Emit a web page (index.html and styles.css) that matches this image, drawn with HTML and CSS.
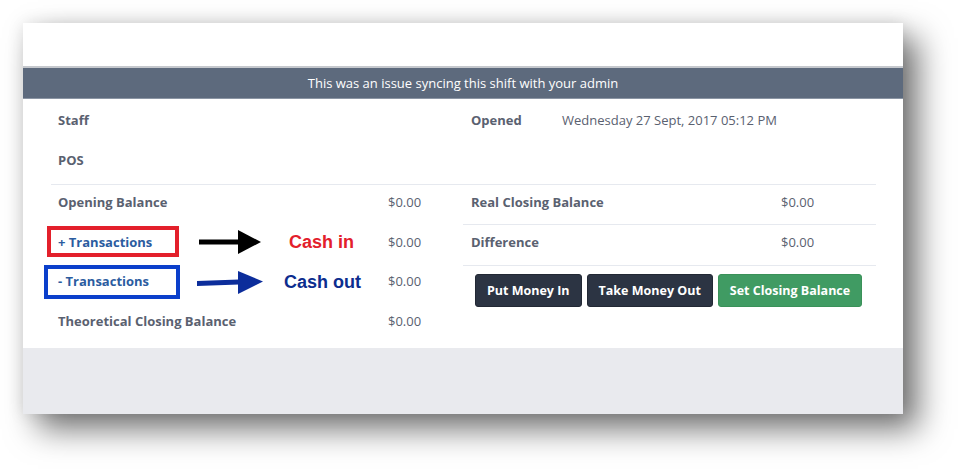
FILE: index.html
```html
<!DOCTYPE html>
<html>
<head>
<meta charset="utf-8">
<link rel="stylesheet" href="styles.css">
</head>
<body>
<div class="card">
  <div class="card-top"></div>
  <div class="banner">This was an issue syncing this shift with your admin</div>
  <div class="content">
    <div class="section top">
      <div class="col left">
        <div class="row"><span class="label">Staff</span></div>
        <div class="row"><span class="label">POS</span></div>
      </div>
      <div class="col right">
        <div class="row opened"><span class="label">Opened</span><span class="value">Wednesday 27 Sept, 2017 05:12 PM</span></div>
      </div>
    </div>
    <div class="section lower">
      <div class="col left">
        <div class="row"><span class="label">Opening Balance</span><span class="value">$0.00</span></div>
        <div class="row annotated short">
          <span class="label link">+ Transactions</span><span class="value">$0.00</span>
          <span class="mark mark-red"></span>
          <svg class="arrow arrow-in" width="62" height="24" viewBox="0 0 62 24"><rect x="0" y="9.5" width="41" height="5" fill="#000"/><polygon points="39,0 62,12 39,24" fill="#000"/></svg>
          <span class="note note-in">Cash in</span>
        </div>
        <div class="row annotated">
          <span class="label link">- Transactions</span><span class="value">$0.00</span>
          <span class="mark mark-blue"></span>
          <svg class="arrow arrow-out" width="66" height="24" viewBox="0 0 66 24"><polygon points="0,10 42,8.5 42,13.5 0,15" fill="#0c2d9b"/><polygon points="41,0 66,10.5 41,23" fill="#0c2d9b"/></svg>
          <span class="note note-out">Cash out</span>
        </div>
        <div class="row"><span class="label">Theoretical Closing Balance</span><span class="value">$0.00</span></div>
      </div>
      <div class="col right">
        <div class="row"><span class="label">Real Closing Balance</span><span class="value">$0.00</span></div>
        <div class="row ruled tall"><span class="label">Difference</span><span class="value">$0.00</span></div>
        <div class="actions ruled">
          <button class="btn btn-dark">Put Money In</button>
          <button class="btn btn-dark">Take Money Out</button>
          <button class="btn btn-green">Set Closing Balance</button>
        </div>
      </div>
    </div>
  </div>
  <div class="card-foot"></div>
</div>
</body>
</html>
```

FILE: styles.css
```css
* { box-sizing: border-box; }
html, body { margin: 0; background: #fff; }
body {
  min-height: 469px;
  padding: 23px 0 0 23px;
  font-family: "Open Sans", "Liberation Sans", sans-serif;
  font-size: 13px;
  color: #5a6170;
}
.card {
  width: 880px;
  background: #fff;
  box-shadow: 15px 15px 30px rgba(0,0,0,0.55), 0 0 16px rgba(0,0,0,0.10);
}
.card-top { height: 43px; }
.banner {
  height: 33px;
  border-top: 2px solid #c5c8cd;
  border-bottom: 1px solid #8b95a4;
  background: #5d6a7d;
  color: #fff;
  text-align: center;
  line-height: 30px;
  font-size: 13px;
}
.content {
  padding: 3px 27px 0 28px;
  height: 249px;
}
.section {
  display: grid;
  grid-template-columns: 412px 413px;
}
.section.top { margin-bottom: 2px; }
.section.lower { border-top: 1px solid #e6e9ef; }
.row {
  display: flex;
  height: 40px;
  padding-top: 8px;
  line-height: 19px;
  border-top: 1px solid transparent;
}
.section.lower .row:first-child { height: 39px; border-top: 0; }
.row.tall { height: 41px; }
.row.short { height: 39px; }
.col.left .row { padding-left: 7px; }
.col.right .row { padding-left: 8px; }
.label { font-weight: 700; }
.col.left .label { width: 330px; }
.col.right .label { width: 310px; }
.col.right .opened .label { width: 91px; }
.value { font-weight: 400; }
.ruled { border-top: 1px solid #e6e9ef; }
.link { color: #2b5c9f; }

.annotated { position: relative; }
.mark { position: absolute; border: 4px solid; }
.mark-red { left: -4px; top: 1px; width: 132px; height: 31px; border-color: #e3202b; }
.mark-blue { left: -7px; top: 1px; width: 136px; height: 34px; border-color: #0b3fcb; }
.arrow { position: absolute; }
.arrow-in { left: 148px; top: 5px; }
.arrow-out { left: 146px; top: 7px; }
.note {
  position: absolute;
  top: 7px;
  font-family: "Liberation Sans", Arial, sans-serif;
  font-weight: 700;
  font-size: 18px;
  line-height: 20px;
}
.note-in { left: 238px; color: #e3202b; }
.note-out { left: 233px; top: 8px; color: #0c2d8e; }

.actions {
  display: flex;
  gap: 5px;
  padding: 8px 0 0 12px;
}
.btn {
  height: 33px;
  padding: 0 11px;
  border-radius: 3px;
  font-family: "Open Sans", "Liberation Sans", sans-serif;
  font-size: 12.5px;
  font-weight: 700;
  color: #fff;
  line-height: 31px;
  white-space: nowrap;
  cursor: pointer;
}
.btn-dark { background: #2c3443; border: 1px solid #222834; }
.btn-green { background: #409b63; border: 1px solid #3a9159; }
.card-foot { height: 66px; background: #e9eaee; }
```
